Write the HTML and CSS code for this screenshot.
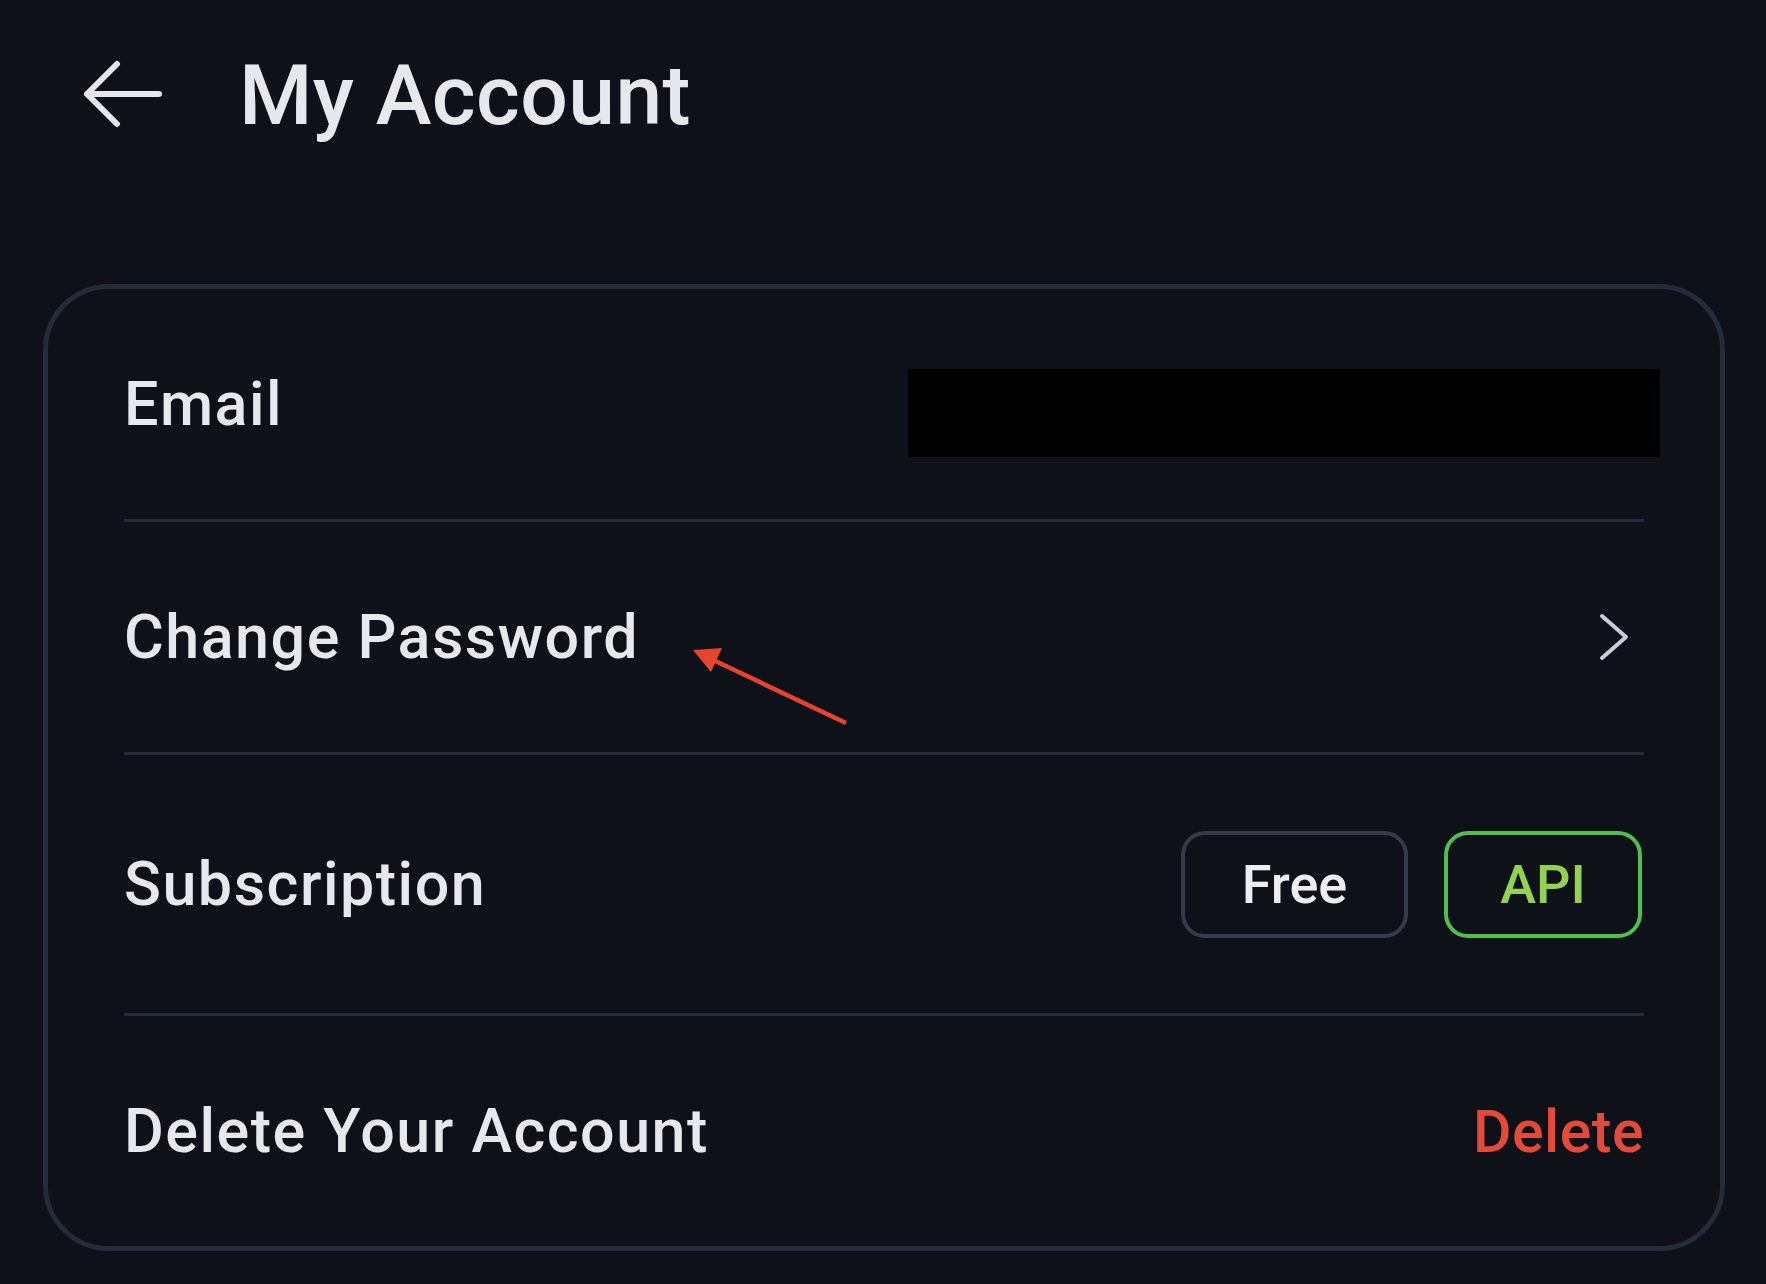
FILE: index.html
```html
<!DOCTYPE html>
<html lang="en">
<head>
    <meta charset="UTF-8">
    <meta name="viewport" content="width=device-width, initial-scale=1.0">
    <title>My Account</title>
    <link rel="stylesheet" href="styles.css">
</head>
<body>
    <div class="page">
        <div class="header">
            <svg class="back" viewBox="0 0 80 72" width="80" height="72">
                <path d="M4 34 H76 M34 4 L4 34 L34 64" fill="none" stroke="#e4e6eb" stroke-width="6" stroke-linecap="round" stroke-linejoin="round"/>
            </svg>
            <h1>My Account</h1>
        </div>

        <div class="card">
            <div class="row">
                <span class="label">Email</span>
                <div class="redacted"></div>
            </div>
            <div class="row">
                <span class="label">Change Password</span>
                <svg class="chevron" viewBox="0 0 32 48" width="32" height="48">
                    <path d="M4 3 L28 24 L4 45" fill="none" stroke="#c9cdd5" stroke-width="4" stroke-linecap="round" stroke-linejoin="round"/>
                </svg>
            </div>
            <div class="row row-tall">
                <span class="label">Subscription</span>
                <div class="plans">
                    <span class="pill">Free</span>
                    <span class="pill pill-api">API</span>
                </div>
            </div>
            <div class="row row-last">
                <span class="label">Delete Your Account</span>
                <span class="danger">Delete</span>
            </div>
        </div>

        <svg class="annotation" viewBox="0 0 180 100" width="180" height="100">
            <line x1="165" y1="87" x2="28" y2="22" stroke="#e8432d" stroke-width="4.5"/>
            <polygon points="12,14 41,12 30,36" fill="#e8432d"/>
        </svg>
    </div>
</body>
</html>
```

FILE: styles.css
```css
body {
    margin: 0;
    background-color: #0e1117;
    font-family: Roboto, "Liberation Sans", Arial, sans-serif;
    color: #e6e8ec;
}
.page {
    position: relative;
    width: 1766px;
    height: 1284px;
    overflow: hidden;
}
.header {
    display: flex;
    align-items: center;
    padding: 60px 0 0 83px;
    height: 72px;
}
.back {
    display: block;
}
h1 {
    margin: 0 0 0 76px;
    font-size: 84px;
    font-weight: 500;
    line-height: 1;
    letter-spacing: 0.4px;
    color: #e6e8ec;
}
.card {
    margin: 152px 41px 0 43px;
    border: 5px solid #252c39;
    border-radius: 66px;
    padding: 0 76px;
}
.row {
    display: flex;
    align-items: center;
    justify-content: space-between;
    height: 230px;
    border-bottom: 3px solid #252b37;
}
.row-tall {
    height: 258px;
}
.row-last {
    border-bottom: none;
    height: 230px;
}
.label {
    font-size: 61px;
    font-weight: 500;
    letter-spacing: 1.5px;
}
.redacted {
    width: 752px;
    height: 88px;
    margin-right: -16px;
    margin-top: 18px;
    background-color: #000;
}
.chevron {
    display: block;
    margin-right: 14px;
}
.plans {
    display: flex;
    gap: 36px;
}
.pill {
    display: flex;
    align-items: center;
    justify-content: center;
    box-sizing: border-box;
    width: 227px;
    height: 107px;
    border: 4px solid #343b49;
    border-radius: 24px;
    font-size: 54px;
    font-weight: 500;
    color: #eceef1;
}
.pill-api {
    width: 198px;
    margin-right: 2px;
    border-color: #4fbf4d;
    color: #93d250;
}
.danger {
    font-size: 59px;
    font-weight: 500;
    letter-spacing: 0.5px;
    color: #e44a39;
}
.annotation {
    position: absolute;
    left: 681px;
    top: 636px;
}
```
